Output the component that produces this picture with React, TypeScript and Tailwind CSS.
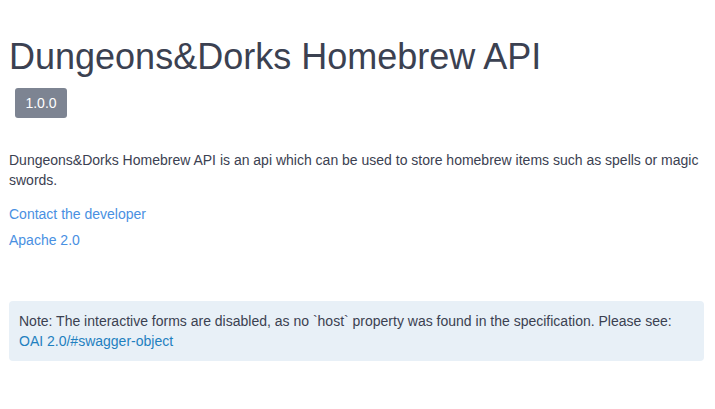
export default function App() {
  return (
    <div className="min-h-screen bg-white px-[9px] pr-[11px] font-['Liberation_Sans',Arial,sans-serif] text-[#3b4151]">
      <div className="pt-[36px]">
        <h2 className="text-[36px] leading-[41px]">Dungeons&amp;Dorks Homebrew API</h2>
        <div className="mt-[11px] ml-[6px] flex">
          <span className="flex h-[30px] w-[52px] items-center justify-center rounded-[3px] bg-[#7d8492] text-[14px] text-white">
            1.0.0
          </span>
        </div>
      </div>

      <div className="mt-[32px] text-[14px] leading-[20px]">
        <p>
          Dungeons&amp;Dorks Homebrew API is an api which can be used to store homebrew items such as spells or magic
          swords.
        </p>
      </div>

      <div className="mt-[14px] flex flex-col gap-[6px] text-[14px] leading-[20px] text-[#4990e2]">
        <a href="#" className="self-start">Contact the developer</a>
        <a href="#" className="self-start">Apache 2.0</a>
      </div>

      <div className="mt-[51px] rounded-[4px] bg-[#e8f0f7] px-[10px] py-[10px] text-[14px] leading-[20px]">
        Note: The interactive forms are disabled, as no `host` property was found in the specification. Please see:{" "}
        <a href="#" className="text-[#1f80c0]">OAI 2.0/#swagger-object</a>
      </div>
    </div>
  );
}
